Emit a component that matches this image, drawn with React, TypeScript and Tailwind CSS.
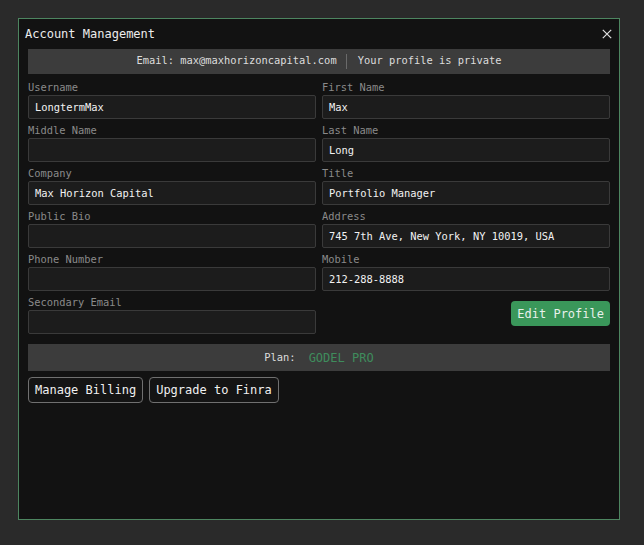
import React from "react";

const Field = ({ label, value }: { label: string; value?: string }) => (
  <div className="flex flex-col">
    <div className="h-[14px] leading-[12px] text-[10.4px] text-[#8a8a8a]">{label}</div>
    <div className="h-[24px] rounded-[2px] border border-[#3a3a3a] bg-[#1c1c1c] px-[6px] pt-[2px] flex items-center text-[10.4px] text-[#f2f2f2] whitespace-nowrap overflow-hidden">
      {value}
    </div>
  </div>
);

export default function App() {
  return (
    <div className="min-h-[545px] w-full bg-[#2a2a2a] pt-[18px] pl-[18px] font-['DejaVu_Sans_Mono',monospace]">
      <div className="w-[602px] h-[502px] border border-[#4d8560] bg-[#121212] flex flex-col">
        <div className="h-[30px] flex items-center justify-between pl-[6px] pr-[7px]">
          <div className="text-[12px] text-[#ececec]">Account Management</div>
          <svg width="10" height="10" viewBox="0 0 10 10" className="text-[#e0e0e0]">
            <path d="M0.8 0.8 L9.2 9.2 M9.2 0.8 L0.8 9.2" stroke="currentColor" strokeWidth="1.2" fill="none" />
          </svg>
        </div>
        <div className="px-[9px] flex flex-col">
          <div className="h-[25px] pb-[1px] bg-[#3c3c3c] flex items-center justify-center text-[10.4px] text-[#dcdcdc]">
            <span>Email: max@maxhorizoncapital.com</span>
            <span className="ml-[9px] mr-[11px] h-[15px] w-px bg-[#6a6a6a]"></span>
            <span>Your profile is private</span>
          </div>
          <div className="mt-[7px] grid grid-cols-2 gap-x-[6px] gap-y-[5px]">
            <Field label="Username" value="LongtermMax" />
            <Field label="First Name" value="Max" />
            <Field label="Middle Name" />
            <Field label="Last Name" value="Long" />
            <Field label="Company" value="Max Horizon Capital" />
            <Field label="Title" value="Portfolio Manager" />
            <Field label="Public Bio" />
            <Field label="Address" value="745 7th Ave, New York, NY 10019, USA" />
            <Field label="Phone Number" />
            <Field label="Mobile" value="212-288-8888" />
            <Field label="Secondary Email" />
            <div className="flex justify-end items-start">
              <button className="mt-[5px] h-[25px] px-[6px] rounded-[4px] bg-[#3a975a] text-[12px] text-[#e8f0ea]">
                Edit Profile
              </button>
            </div>
          </div>
          <div className="mt-[10px] h-[27px] bg-[#3c3c3c] flex items-center justify-center">
            <span className="text-[10.4px] text-[#dcdcdc]">Plan:</span>
            <span className="ml-[13px] text-[12px] text-[#3f8c5c]">GODEL PRO</span>
          </div>
          <div className="mt-[6px] flex gap-[6px]">
            <button className="h-[26px] px-[6px] rounded-[4px] border border-[#707070] bg-[#141414] text-[12px] text-[#f0f0f0]">
              Manage Billing
            </button>
            <button className="h-[26px] px-[6px] rounded-[4px] border border-[#707070] bg-[#141414] text-[12px] text-[#f0f0f0]">
              Upgrade to Finra
            </button>
          </div>
        </div>
      </div>
    </div>
  );
}
